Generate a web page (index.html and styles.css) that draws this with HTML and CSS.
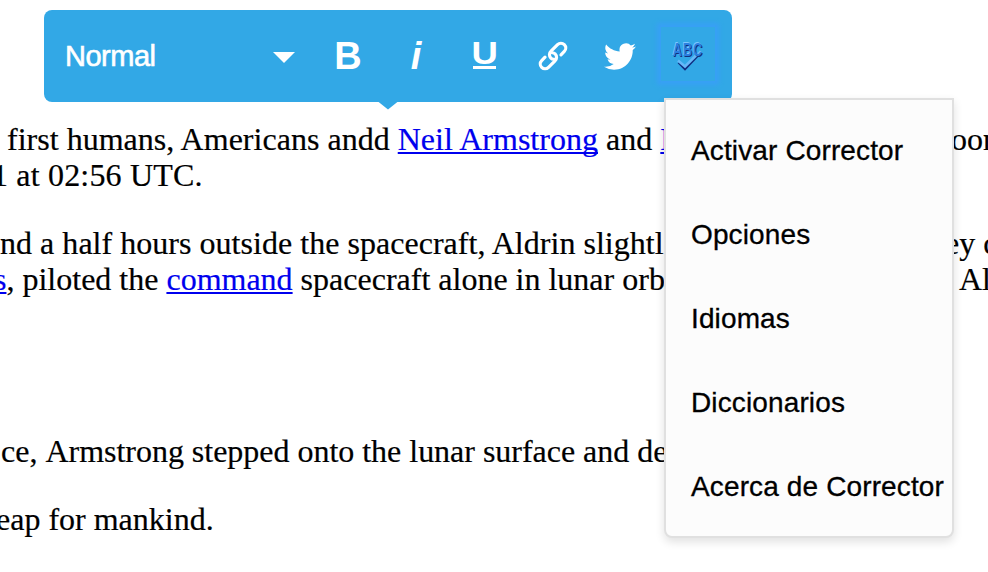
FILE: index.html
```
<!DOCTYPE html>
<html lang="es">
<head>
<meta charset="utf-8">
<title>Editor</title>
<link rel="stylesheet" href="styles.css">
</head>
<body>
<main class="editor">
  <div class="toolbar">
    <div class="format"><span class="format-label">Normal</span><svg class="caret" viewBox="0 0 22 11"><path d="M0 0h22L11 11z"/></svg></div>
    <div class="tool"><span class="bold">B</span></div>
    <div class="tool"><span class="italic">i</span></div>
    <div class="tool"><svg class="under" viewBox="0 0 36 36"><text x="5.4" y="29" textLength="26.4" lengthAdjust="spacingAndGlyphs">U</text><path d="M7 31h23v3h-23z"/></svg></div>
    <div class="tool">
      <svg class="icon" viewBox="0 0 36 36"><g transform="translate(19 18) rotate(-45)" fill="none" stroke="#fff" stroke-width="3.2" stroke-linecap="round"><path d="M6.5 4.8H11.2a4.8 4.8 0 0 0 0-9.6H2a4.8 4.8 0 0 0-5 4.8q0 1.8 1.4 3"/><path d="M-6.5 -4.8H-11.2a4.8 4.8 0 0 0 0 9.6H-2a4.8 4.8 0 0 0 5-4.8q0-1.8-1.4-3"/></g></svg>
    </div>
    <div class="tool">
      <svg class="bird" viewBox="0 2 24 20" preserveAspectRatio="none"><path d="M23.95 4.57a10 10 0 0 1-2.82.77 4.96 4.96 0 0 0 2.16-2.72c-.95.55-2 .95-3.13 1.18a4.92 4.92 0 0 0-8.38 4.48C7.69 8.1 4.07 6.13 1.64 3.16a4.92 4.92 0 0 0 1.52 6.57 4.9 4.9 0 0 1-2.23-.61v.06c0 2.38 1.7 4.37 3.95 4.83a5 5 0 0 1-2.21.08 4.94 4.94 0 0 0 4.6 3.42A9.87 9.87 0 0 1 0 19.54a14 14 0 0 0 7.55 2.21c9.05 0 14-7.5 14-13.98 0-.21 0-.42-.02-.63a9.94 9.94 0 0 0 2.42-2.57z"/></svg>
    </div>
    <div class="tool"><div class="spell">
      <svg class="abc" viewBox="0 0 32 32"><path d="M6.5 22.5l6.5 6.5L25.5 16" fill="none" stroke="#102d80" stroke-width="2.4"/><path d="M6 20.5l7 6L25 14.5" fill="none" stroke="#65b8f8" stroke-width="2.6"/><g transform="translate(.8 16) scale(.84 1.22)"><text x="0" y="0" textLength="35">ABC</text></g></svg>
    </div></div>
    <svg class="pointer" viewBox="0 0 20 8"><path d="M0 0h20L10 8z"/></svg>
  </div>
  <div class="menu">
    <div class="item"><span>Activar Corrector</span></div>
    <div class="item"><span>Opciones</span></div>
    <div class="item"><span>Idiomas</span></div>
    <div class="item"><span>Diccionarios</span></div>
    <div class="item"><span>Acerca de Corrector</span></div>
  </div>
  <article class="copy">
    <p>
      <span class="line"><span class="a">first humans, Americans andd <a href="#">Neil Armstrong</a> and <a href="#">B</a></span><span class="t1">oon</span></span>
      <span class="line"><span class="b">1 at 02:56 UTC.</span></span>
    </p>
    <p>
      <span class="line"><span class="c">nd a half hours outside the spacecraft, Aldrin slightl</span><span class="t2">ey c</span></span>
      <span class="line"><span class="d"><a href="#">s</a>, piloted the <a href="#">command</a> spacecraft alone in lunar orb</span><span class="t3">Al</span></span>
    </p>
    <p class="later"><span class="line"><span class="e">ce, <span class="rest">Armstrong stepped onto the lunar surface and de</span></span></span></p>
    <p><span class="line"><span class="f">eap for mankind.</span></span></p>
  </article>
</main>
</body>
</html>
```
FILE: styles.css
```
* { box-sizing: border-box; }
body { margin: 0; background: #fff; }
.editor { position: relative; width: 988px; height: 572px; padding-top: 10px; overflow: hidden; }
.toolbar {
  position: relative; display: flex; align-items: center;
  width: 688px; height: 92px; margin-left: 44px; padding-right: 10px;
  background: #32a8e6; border-radius: 8px; color: #fff;
  font-family: "Liberation Sans", sans-serif;
}
.format { display: flex; align-items: center; justify-content: space-between; width: 270px; padding: 0 19px 0 21px; }
.format-label { font-size: 29px; line-height: 34px; letter-spacing: -0.5px; -webkit-text-stroke: 0.6px #fff; }
.caret { width: 22px; height: 11px; fill: #fff; margin-top: 2px; }
.tool { display: flex; align-items: center; justify-content: center; width: 68px; height: 92px; }
.bold, .italic { font-size: 38px; font-weight: bold; line-height: 40px; }
.italic { font-style: italic; }
.under { width: 36px; height: 36px; margin-bottom: 6px; fill: #fff; font: bold 31px "Liberation Sans", sans-serif; }
.icon { width: 36px; height: 36px; }
.bird { width: 32px; height: 27px; fill: #fff; }
.spell {
  display: flex; align-items: center; justify-content: center; width: 54px; height: 54px; margin-top: -4px;
  background: #32a8e6; box-shadow: 0 0 4px 4px #38a0f5;
}
.abc { width: 32px; height: 32px; margin-top: 4px; }
.abc text { font: bold 15px "Liberation Sans", sans-serif; fill: #2a7fe0; text-shadow: 1px 1px 0 #12307c, -1px -1px 0 #7cc6ff; }
.pointer { position: absolute; left: 334px; top: 91px; width: 20px; height: 9px; fill: #32a8e6; }
.menu {
  position: absolute; left: 664px; top: 98px; z-index: 2;
  width: 290px; height: 440px; padding: 9px 0 0 25px;
  background: #fcfcfc; border: 2px solid #e0e0e0; border-radius: 0 0 8px 8px;
  box-shadow: 0 4px 10px rgba(0,0,0,.12);
  font: 28px/84px "Liberation Sans", sans-serif; letter-spacing: 0.13px; color: #000; white-space: nowrap;
}
.item { height: 84px; -webkit-text-stroke: 0.3px #000; }
.copy { padding-top: 19px; font: 32px/36px "Liberation Serif", serif; color: #000; -webkit-text-stroke: 0.2px; }
.copy p { margin: 0 0 32px; }
.copy p.later { margin-top: 136px; }
.line { display: grid; grid-template-columns: 945px 43px; height: 36px; white-space: nowrap; }
.copy a { color: #00e; text-decoration: underline; text-decoration-thickness: 2px; text-underline-offset: 2px; text-decoration-skip-ink: none; }
.a { margin-left: 7px; letter-spacing: 0.02px; }
.b { margin-left: -8px; letter-spacing: 0.18px; }
.c { letter-spacing: 0.03px; }
.d { margin-left: -6px; }
.e { margin-left: 1px; }
.rest { margin-left: 0; letter-spacing: -0.02px; }
.f { margin-left: -4px; }
.t1 { margin-left: 6px; }
.t2 { margin-left: 0; }
.t3 { margin-left: 14px; }
```
